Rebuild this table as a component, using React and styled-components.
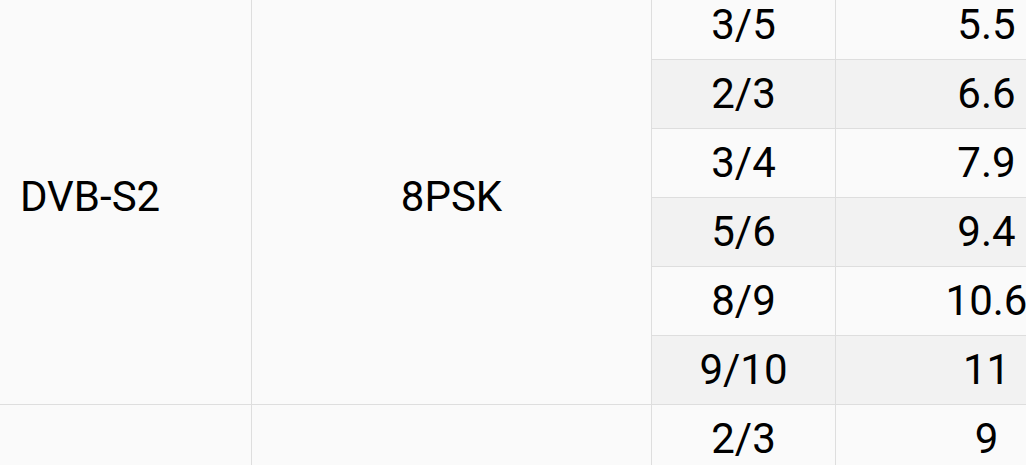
import React from "react";
import styled, { createGlobalStyle } from "styled-components";

const GlobalStyle = createGlobalStyle`
  html, body {
    margin: 0;
    padding: 0;
    overflow: hidden;
    background: #fafafa;
  }
  body {
    font-family: Roboto, "Liberation Sans", Arial, sans-serif;
    color: #000;
  }
`;

const Wrap = styled.div`
  margin-top: -9px;
  width: 1138px;
`;

const Table = styled.table`
  border-collapse: separate;
  border-spacing: 0;
  table-layout: fixed;
  width: 1138px;
  font-size: 42px;
`;

const Col = styled.col`
  width: ${({ $w }) => $w}px;
`;

const Cell = styled.td`
  height: 68px;
  padding: 0 ${({ $align }) => ($align === "left" ? "20px" : "0")};
  text-align: ${({ $align }) => $align || "center"};
  vertical-align: middle;
  background: ${({ $striped }) => ($striped ? "#f2f2f2" : "#fafafa")};
  border-right: 1px solid #dedede;
  border-bottom: 1px solid #dedede;
  white-space: nowrap;
  line-height: 1.2;
`;

const columns = [252, 400, 184, 302];

const groups = [
  {
    standard: "DVB-S2",
    modulation: "8PSK",
    rows: [
      ["3/5", "5.5"],
      ["2/3", "6.6"],
      ["3/4", "7.9"],
      ["5/6", "9.4"],
      ["8/9", "10.6"],
      ["9/10", "11"]
    ]
  },
  {
    standard: "",
    modulation: "",
    rows: [["2/3", "9"]]
  }
];

const App = () => {
  return (
    <>
      <GlobalStyle />
      <Wrap>
        <Table>
          <colgroup>
            {columns.map((w, i) => (
              <Col key={i} $w={w} />
            ))}
          </colgroup>
          <tbody>
            {groups.map((g, gi) =>
              g.rows.map(([rate, snr], ri) => (
                <tr key={`${gi}-${ri}`}>
                  {ri === 0 && (
                    <>
                      <Cell $align="left" rowSpan={g.rows.length}>
                        {g.standard}
                      </Cell>
                      <Cell rowSpan={g.rows.length}>{g.modulation}</Cell>
                    </>
                  )}
                  <Cell $striped={ri % 2 === 1}>{rate}</Cell>
                  <Cell $striped={ri % 2 === 1}>{snr}</Cell>
                </tr>
              ))
            )}
          </tbody>
        </Table>
      </Wrap>
    </>
  );
};

export default App;
